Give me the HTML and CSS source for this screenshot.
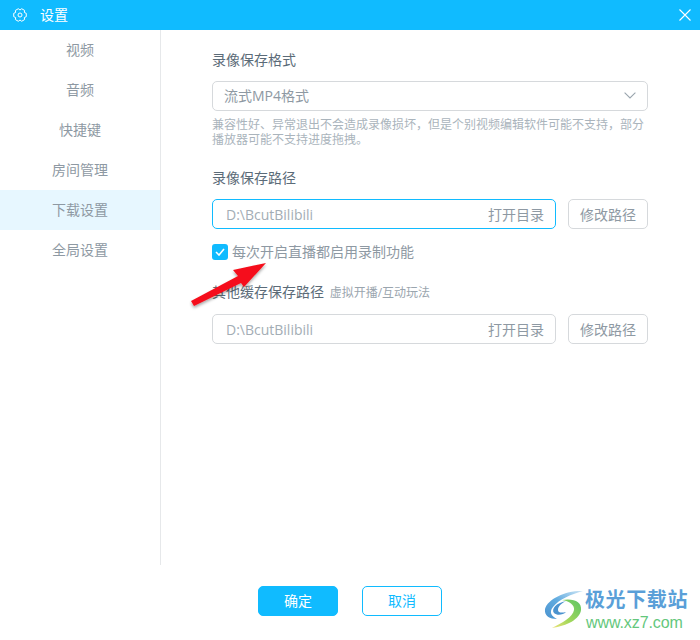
FILE: index.html
```html
<!DOCTYPE html>
<html lang="zh-CN">
<head>
    <meta charset="UTF-8">
    <title>设置</title>
    <link rel="stylesheet" href="styles.css">
</head>
<body>
    <header class="titlebar">
        <svg class="gear" width="14" height="14" viewBox="0 0 14 14">
            <path d="M13.28 5.32L13.28 8.68 11.33 9.5 11.6 11.6 8.68 13.28 7 12 5.32 13.28 2.4 11.6 2.67 9.5 0.72 8.68 0.72 5.32 2.67 4.5 2.4 2.4 5.32 0.72 7 2 8.68 0.72 11.6 2.4 11.33 4.5z" fill="none" stroke="#fff" stroke-width="1" stroke-linejoin="round"/>
            <circle cx="7" cy="7" r="2" fill="none" stroke="#fff" stroke-width="1"/>
        </svg>
        <span class="titlebar-text">设置</span>
        <svg class="close" width="12" height="12" viewBox="0 0 12 12">
            <path d="M0.5 0.5l11 11M11.5 0.5l-11 11" stroke="#fff" stroke-width="1.1"/>
        </svg>
    </header>

    <div class="content">
        <nav class="sidebar">
            <a class="nav-item">视频</a>
            <a class="nav-item">音频</a>
            <a class="nav-item">快捷键</a>
            <a class="nav-item">房间管理</a>
            <a class="nav-item active">下载设置</a>
            <a class="nav-item">全局设置</a>
        </nav>

        <main class="main">
            <h2 class="label">录像保存格式</h2>
            <div class="field select">
                <span>流式MP4格式</span>
                <svg width="12" height="7" viewBox="0 0 12 7">
                    <path d="M0.6 0.6L6 6l5.4-5.4" fill="none" stroke="#9aa5ae" stroke-width="1.1"/>
                </svg>
            </div>
            <p class="hint">兼容性好、异常退出不会造成录像损坏，但是个别视频编辑软件可能不支持，部分播放器可能不支持进度拖拽。</p>

            <h2 class="label label-path">录像保存路径</h2>
            <div class="path-row">
                <div class="field path focus">
                    <span class="path-value">D:\BcutBilibili</span>
                    <span class="path-open">打开目录</span>
                </div>
                <button class="btn-change">修改路径</button>
            </div>

            <label class="check-row">
                <span class="checkbox">
                    <svg width="10" height="8" viewBox="0 0 10 8">
                        <path d="M1 4l3 3 5-6" fill="none" stroke="#fff" stroke-width="1.6"/>
                    </svg>
                </span>
                <span class="check-text">每次开启直播都启用录制功能</span>
            </label>

            <h2 class="label label-other">其他缓存保存路径 <small>虚拟开播/互动玩法</small></h2>
            <div class="path-row">
                <div class="field path">
                    <span class="path-value">D:\BcutBilibili</span>
                    <span class="path-open">打开目录</span>
                </div>
                <button class="btn-change">修改路径</button>
            </div>
        </main>
    </div>

    <footer class="footer">
        <button class="btn btn-primary">确定</button>
        <button class="btn btn-cancel">取消</button>
    </footer>

    <!-- red annotation arrow on top of the screenshot -->
    <svg class="arrow" width="90" height="56" viewBox="0 0 90 56">
        <defs>
            <filter id="arrowShadow" x="-20%" y="-20%" width="140%" height="160%">
                <feDropShadow dx="0" dy="2" stdDeviation="1.5" flood-color="#000" flood-opacity="0.35"/>
            </filter>
        </defs>
        <path d="M77 5L44 12 49 18 2 43 5 48 52 25 55 29z" fill="#f5101a" filter="url(#arrowShadow)"/>
    </svg>

    <div class="watermark">
        <svg class="watermark-logo" width="45" height="50" viewBox="0 0 45 50">
            <defs>
                <linearGradient id="blueSwoosh" x1="1" y1="0" x2="0" y2="1">
                    <stop offset="0" stop-color="#cfe6f5"/>
                    <stop offset="0.5" stop-color="#62ace0"/>
                    <stop offset="1" stop-color="#4b93cf"/>
                </linearGradient>
                <linearGradient id="greenSwoosh" x1="1" y1="0" x2="0" y2="1">
                    <stop offset="0" stop-color="#5cc466"/>
                    <stop offset="0.6" stop-color="#a4d85a"/>
                    <stop offset="1" stop-color="#f0e27a"/>
                </linearGradient>
            </defs>
            <path d="M43 3C28 2 8 10 5 21 4 28 10 31 17 31 11 28 9 24 13 19 19 11 32 6 43 3z" fill="url(#blueSwoosh)"/>
            <path d="M26 13C16 15 11 21 14 25 17 28 23 27 26 24 22 25 18 25 18 22 18 18 22 15 26 13z" fill="#4b93cf"/>
            <path d="M22 12C34 10 42 14 41 22 40 31 27 38 12 40 22 35 33 29 34 22 35 17 29 13 22 12z" fill="url(#greenSwoosh)"/>
        </svg>
        <div class="watermark-text">
            <div class="watermark-name">极光下载站</div>
            <div class="watermark-url">www.xz7.com</div>
        </div>
    </div>
</body>
</html>
```

FILE: styles.css
```css
* {
    box-sizing: border-box;
}

html, body {
    height: 100%;
}

body {
    margin: 0;
    position: relative;
    display: flex;
    flex-direction: column;
    background: #fff;
    color: #5b6b78;
    font-family: "Open Sans", "Noto Sans CJK SC", sans-serif;
    font-size: 14px;
    overflow: hidden;
}

.titlebar {
    height: 30px;
    flex: none;
    display: flex;
    align-items: center;
    padding: 0 9px 0 13px;
    background: #10bbff;
    color: #fff;
}

.titlebar-text {
    margin-left: 13px;
    margin-bottom: 2px;
    font-size: 14px;
}

.close {
    margin-left: auto;
}

.content {
    height: 535px;
    flex: none;
    display: flex;
}

.sidebar {
    width: 161px;
    flex: none;
    border-right: 1px solid #e6e8ea;
}

.nav-item {
    display: block;
    height: 40px;
    line-height: 40px;
    text-align: center;
    color: #8e99a3;
}

.nav-item.active {
    background: #e7f7ff;
}

.main {
    flex: 1;
    padding: 20px 52px 0 51px;
}

.label {
    margin: 0;
    height: 20px;
    line-height: 20px;
    font-size: 14px;
    font-weight: 400;
    color: #5b6b78;
}

.label small {
    margin-left: 2px;
    font-size: 12px;
    color: #9aa5ae;
}

.label-path {
    margin-top: 21px;
}

.label-other {
    margin-top: 22px;
    margin-bottom: 12px;
}

.field {
    height: 30px;
    display: flex;
    align-items: center;
    justify-content: space-between;
    border: 1px solid #d6d9dc;
    border-radius: 5px;
    background: #fff;
    color: #8e99a3;
}

.select {
    margin-top: 11px;
    padding: 0 11px 2px;
}

.hint {
    margin: 6px 0 0;
    font-size: 12px;
    line-height: 15px;
    color: #aab4bc;
}

.path-row {
    margin-top: 11px;
    display: flex;
    justify-content: space-between;
}

.label-other + .path-row {
    margin-top: 0;
}

.path {
    width: 344px;
    padding: 0 11px 0 13px;
}

.path.focus {
    border-color: #10bbff;
}

.path-value {
    color: #a3adb5;
}

.path-open {
    color: #8e99a3;
}

.btn-change {
    width: 80px;
    height: 30px;
    padding: 0;
    border: 1px solid #d6d9dc;
    border-radius: 5px;
    background: #fff;
    color: #8e99a3;
    font: inherit;
}

.check-row {
    margin-top: 15px;
    height: 16px;
    display: flex;
    align-items: center;
    gap: 4px;
    color: #8e99a3;
}

.check-text {
    margin-bottom: 2px;
}

.checkbox {
    width: 16px;
    height: 16px;
    display: flex;
    align-items: center;
    justify-content: center;
    border-radius: 3px;
    background: #10bbff;
}

.footer {
    margin-top: 21px;
    display: flex;
    justify-content: center;
    gap: 24px;
}

.btn {
    width: 80px;
    height: 30px;
    padding: 0 0 2px;
    border: 1px solid #10bbff;
    border-radius: 5px;
    font: inherit;
}

.btn-primary {
    background: #10bbff;
    color: #fff;
}

.btn-cancel {
    background: #fff;
    color: #10bbff;
}

.arrow {
    position: absolute;
    left: 189px;
    top: 258px;
}

.watermark {
    position: absolute;
    left: 540px;
    top: 588px;
    display: flex;
    white-space: nowrap;
}

.watermark-name {
    font-size: 20px;
    font-weight: 700;
    line-height: 24px;
    letter-spacing: 0.6px;
    color: #5a9fd8;
}

.watermark-url {
    margin: 2px 0 0 1px;
    font-family: "Liberation Sans", sans-serif;
    font-size: 16px;
    line-height: 18px;
    letter-spacing: -0.1px;
    color: #64c77c;
}
```
